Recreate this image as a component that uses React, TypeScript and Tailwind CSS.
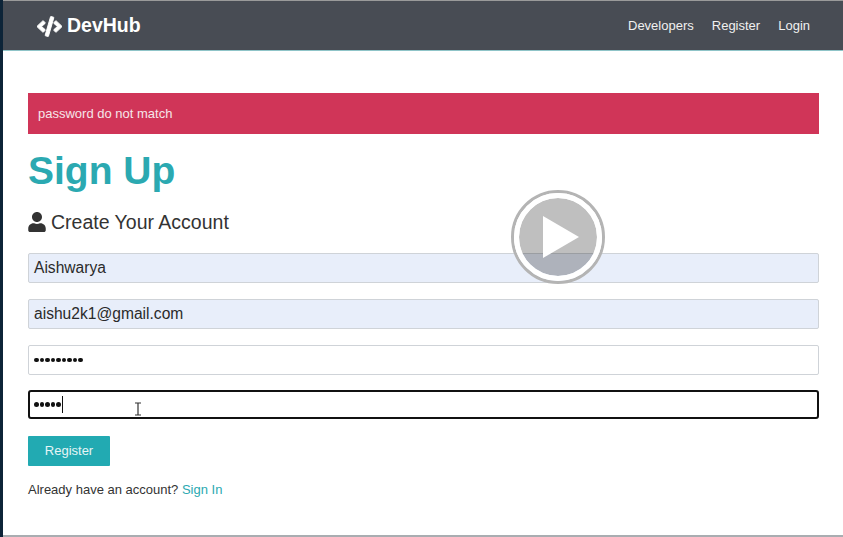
import { FaCode, FaUser } from "react-icons/fa"

const links = ["Developers", "Register", "Login"]

function Field({ value, filled }: { value: string; filled?: boolean }) {
  return (
    <div
      className={`flex h-[30px] items-center rounded-[2px] border border-[#cfd3d8] px-[5px] text-[15.6px] text-[#2a2a2a] ${filled ? "bg-[#e8eefa]" : "bg-white"}`}
    >
      {value}
    </div>
  )
}

function Dots({ count }: { count: number }) {
  return (
    <span className="flex gap-[1px]">
      {Array.from({ length: count }).map((_, i) => (
        <span key={i} className="size-[4.5px] rounded-full bg-[#111]" />
      ))}
    </span>
  )
}

export default function App() {
  return (
    <div className="flex h-[537px] w-[843px] overflow-hidden bg-white font-['Liberation_Sans',Arial,sans-serif]">
      <div className="w-[3px] shrink-0 bg-[#0d2438]" />
      <div className="relative flex min-w-0 flex-1 flex-col">
        <header className="flex h-[51px] shrink-0 items-center justify-between border-t border-b border-t-[#9a9a9a] border-b-[#8fc4c8] bg-[#484c54] pt-[1px] pr-[33px] pl-[34px] text-white">
          <div className="flex items-center gap-[5px]">
            <FaCode className="size-[25px]" stroke="currentColor" strokeWidth={24} />
            <span className="text-[19.5px] font-bold">DevHub</span>
          </div>
          <nav className="flex gap-[18px] text-[13px] text-[#f0f0f0]">
            {links.map((link) => (
              <a key={link}>{link}</a>
            ))}
          </nav>
        </header>

        <main className="flex flex-1 flex-col pt-[42px] pr-[24px] pl-[25px]">
          <div className="flex h-[41px] items-center bg-[#d03558] px-[10px] text-[13px] text-[#f6e6ea]">
            password do not match
          </div>
          <h1 className="mt-[14px] text-[39px] leading-[45px] font-bold text-[#2ba9b1]">
            Sign Up
          </h1>
          <div className="mt-[17px] flex items-center gap-[4px] text-[19.5px] leading-[24px] text-[#333]">
            <FaUser className="-ml-[1px] size-[20px]" />
            <span>Create Your Account</span>
          </div>

          <div className="mt-[19px] flex flex-col gap-[16px]">
            <Field value="Aishwarya" filled />
            <Field value="aishu2k1@gmail.com" filled />
            <div className="flex h-[30px] items-center rounded-[2px] border border-[#cfd3d8] px-[5px]">
              <Dots count={9} />
            </div>
            <div className="-mt-[1px] flex h-[29px] items-center rounded-[3px] border-2 border-[#111] px-[4px]">
              <Dots count={5} />
              <span className="ml-[1px] h-[17px] w-[1px] bg-[#111]" />
              <svg
                className="mt-[8px] ml-[71px]"
                width="8"
                height="14"
                viewBox="0 0 8 14"
                fill="none"
                stroke="#333"
                strokeWidth="1.2"
              >
                <path d="M1 1h6M1 13h6M4 1v12" />
              </svg>
            </div>
          </div>

          <button
            type="button"
            className="mt-[17px] h-[30px] w-[82px] rounded-[1px] bg-[#22aab2] text-[13px] text-[#e6f5f6]"
          >
            Register
          </button>
          <p className="mt-[15px] text-[13px] leading-[18px] text-[#333]">
            Already have an account? <a className="text-[#2ba9b1]">Sign In</a>
          </p>
        </main>

        <div className="h-[2px] shrink-0 bg-[#a9adb1]" />

        <div className="absolute top-[190px] left-[508px] size-[94px] rounded-full border-[3px] border-[#b4b4b4]">
          <div className="flex size-full items-center justify-center rounded-full border-[5px] border-white bg-black/25 bg-clip-padding">
            <svg width="36" height="42" viewBox="0 0 36 42" className="ml-[5px]" fill="#fff">
              <path d="M0 0L36 21L0 42Z" />
            </svg>
          </div>
        </div>
      </div>
    </div>
  )
}
